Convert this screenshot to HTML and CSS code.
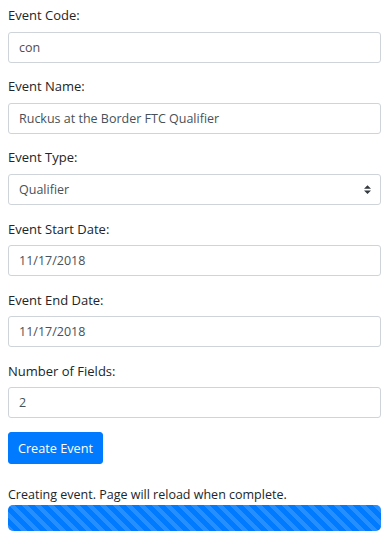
FILE: index.html
```html
<!DOCTYPE html>
<html>
<head>
<meta charset="utf-8">
<link rel="stylesheet" href="styles.css">
</head>
<body>
<div class="page">
  <form class="form">
    <div class="group">
      <label class="label">Event Code:</label>
      <input class="control" type="text" value="con">
    </div>
    <div class="group">
      <label class="label">Event Name:</label>
      <input class="control" type="text" value="Ruckus at the Border FTC Qualifier">
    </div>
    <div class="group">
      <label class="label">Event Type:</label>
      <div class="select">
        <span class="select-value">Qualifier</span>
        <svg class="select-arrow" width="7" height="9" viewBox="0 0 4 5"><path d="M2 0L0 2h4zm0 5L0 3h4z" fill="#343a40"/></svg>
      </div>
    </div>
    <div class="group">
      <label class="label">Event Start Date:</label>
      <input class="control" type="text" value="11/17/2018">
    </div>
    <div class="group">
      <label class="label">Event End Date:</label>
      <input class="control" type="text" value="11/17/2018">
    </div>
    <div class="group">
      <label class="label">Number of Fields:</label>
      <input class="control" type="text" value="2">
    </div>
    <button class="btn" type="button">Create Event</button>
  </form>
  <div class="status">
    <p class="status-text">Creating event. Page will reload when complete.</p>
    <div class="progress"><div class="progress-bar"></div></div>
  </div>
</div>
</body>
</html>
```
FILE: styles.css
```css
html, body {
  margin: 0;
  padding: 0;
  background: #ffffff;
}
body {
  font-family: "Open Sans", "Noto Sans", sans-serif;
  font-size: 13px;
  color: #212529;
}
.page {
  padding: 5px 11px 0 8px;
}
.form {
  display: flex;
  flex-direction: column;
  align-items: flex-start;
}
.group {
  display: flex;
  flex-direction: column;
  align-self: stretch;
  margin-bottom: 13.7px;
}
.label {
  display: block;
  line-height: 20px;
  height: 20px;
  margin-bottom: 6.5px;
  font-size: 13px;
  color: #212529;
}
.control, .select {
  box-sizing: border-box;
  height: 31px;
  width: 100%;
  border: 1px solid #ced4da;
  border-radius: 3px;
  padding: 0 10px;
  font-family: inherit;
  font-size: 12.5px;
  color: #495057;
  background: #fff;
  outline: none;
  margin: 0;
}
.select {
  display: flex;
  align-items: center;
  justify-content: space-between;
  padding-right: 9px;
}
.select-arrow {
  display: block;
}
.btn {
  box-sizing: border-box;
  height: 32px;
  width: 95px;
  padding: 0;
  border: 1px solid #007bff;
  border-radius: 3px;
  background: #007bff;
  color: #fff;
  font-family: inherit;
  font-size: 12.7px;
  cursor: pointer;
}
.status {
  margin-top: 21px;
}
.status-text {
  margin: 0;
  line-height: 20px;
  font-size: 12.5px;
  color: #212529;
}
.progress {
  height: 26px;
  border-radius: 5px;
  overflow: hidden;
  background: #e9ecef;
}
.progress-bar {
  height: 100%;
  width: 100%;
  background-color: #007bff;
  background-image: linear-gradient(45deg, rgba(255,255,255,.15) 25%, transparent 25%, transparent 50%, rgba(255,255,255,.15) 50%, rgba(255,255,255,.15) 75%, transparent 75%, transparent);
  background-size: 13px 13px;
}
```
